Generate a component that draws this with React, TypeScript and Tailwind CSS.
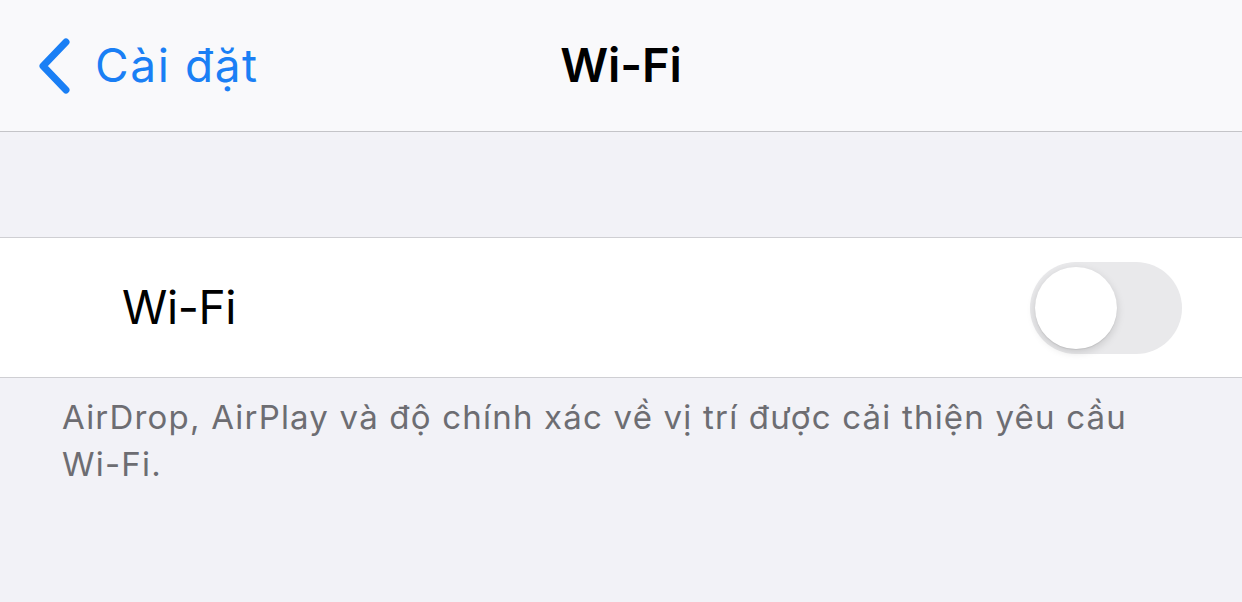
import React from 'react';

function BackChevron(): JSX.Element {
  return (
    <svg width="40" height="60" viewBox="0 0 40 60" fill="none" xmlns="http://www.w3.org/2000/svg">
      <polyline points="31,6 8,30 31,54" stroke="#1a7ff5" strokeWidth="7" strokeLinecap="round" strokeLinejoin="round" />
    </svg>
  );
}

function Toggle(): JSX.Element {
  return (
    <div className="w-[152px] h-[92px] rounded-full bg-[#e9e9eb] flex items-center px-[5px]">
      <div className="w-[82px] h-[82px] rounded-full bg-white shadow-[0_3px_8px_rgba(0,0,0,0.15),0_1px_1px_rgba(0,0,0,0.08)]" />
    </div>
  );
}

export default function App(): JSX.Element {
  return (
    <div className="w-[1242px] h-[602px] overflow-hidden bg-[#f2f2f7] font-['Inter','Liberation_Sans',sans-serif]">
      <header className="h-[132px] bg-[#f9f9fb] border-b border-[#c4c4c8] flex items-center relative">
        <div className="flex items-center pl-[35px] gap-[20px]">
          <BackChevron />
          <span className="text-[46px] text-[#1a7ff5] tracking-[1.6px]">Cài đặt</span>
        </div>
        <h1 className="absolute left-0 right-0 text-center text-[47px] font-semibold text-black tracking-[-0.1px]">Wi-Fi</h1>
      </header>
      <div className="h-[105px]" />
      <div className="h-[141px] bg-white border-y border-[#cfcfd3] flex items-center justify-between pl-[122px] pr-[60px]">
        <span className="text-[46px] text-black tracking-[-0.4px]">Wi-Fi</span>
        <Toggle />
      </div>
      <p className="pl-[62px] pr-[100px] pt-[16px] text-[33px] leading-[47px] tracking-[1.2px] text-[#6d6d72]">
        AirDrop, AirPlay và độ chính xác về vị trí được cải thiện yêu cầu Wi-Fi.
      </p>
    </div>
  );
}
